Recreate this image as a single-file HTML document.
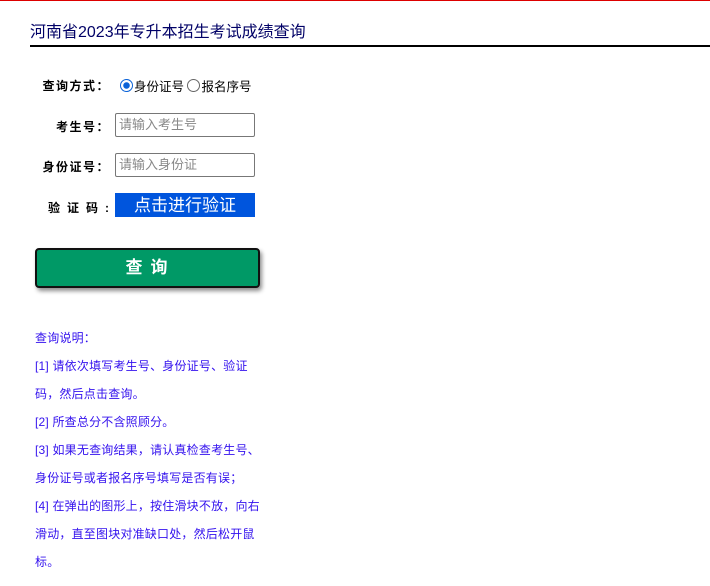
<!DOCTYPE html>
<html><head><meta charset="utf-8"><style>
body{margin:0;width:710px;height:586px;background:#fff;font-family:"Liberation Sans","Noto Sans CJK SC",sans-serif;position:relative;overflow:hidden}
.a{position:absolute}
.top{left:0;top:0;width:710px;height:1px;background:#d00}
.title{left:30px;top:18px;font-size:16px;color:#000066;white-space:nowrap}
.hr{left:30px;top:45px;width:680px;height:2px;background:#000}
.lab{font-size:12px;font-weight:bold;color:#000;text-align:right;width:80px;left:30px;letter-spacing:1.5px}
.inp{left:115px;border:1px solid #777;border-radius:2px;font-size:13px;color:#888;line-height:22px;padding-left:3px;box-sizing:border-box;width:140px;height:24px}
.rad{display:inline-block;width:11px;height:11px;border-radius:50%;border:1px solid #666;vertical-align:-1px;margin-right:1px}
.ver{left:115px;top:193px;width:140px;height:24px;background:#0055dd;color:#fff;font-size:17px;text-align:center;line-height:26px}
.btn{left:35px;top:248px;width:221px;height:36px;background:#009966;border:2px solid #111;border-radius:4px;box-shadow:2px 3px 4px rgba(0,0,0,.45);color:#fff;font-size:17px;font-weight:bold;text-align:center;line-height:36px;letter-spacing:8px;text-indent:6px}
.ins{left:35px;top:324px;width:232px;font-size:12px;color:#3311ee;line-height:28px;letter-spacing:0.2px}
</style></head><body>
<div class="a top"></div>
<div class="a title">河南省2023年专升本招生考试成绩查询</div>
<div class="a hr"></div>
<div class="a lab" style="top:77px">查询方式：</div>
<div class="a" style="left:120px;top:76px;font-size:12.5px;white-space:nowrap"><span class="rad" style="border-color:#0a62d8;background:radial-gradient(circle,#0a62d8 3px,#fff 3.5px)"></span>身份证号 <span class="rad"></span>报名序号</div>
<div class="a lab" style="top:118px">考生号：</div>
<div class="a inp" style="top:113px">请输入考生号</div>
<div class="a lab" style="top:158px">身份证号：</div>
<div class="a inp" style="top:153px">请输入身份证</div>
<div class="a lab" style="top:199px;letter-spacing:7px;width:86px">验证码:</div>
<div class="a ver">点击进行验证</div>
<div class="a btn">查询</div>
<div class="a ins">查询说明：<br>[1] 请依次填写考生号、身份证号、验证码，然后点击查询。<br>[2] 所查总分不含照顾分。<br>[3] 如果无查询结果，请认真检查考生号、身份证号或者报名序号填写是否有误；<br>[4] 在弹出的图形上，按住滑块不放，向右滑动，直至图块对准缺口处，然后松开鼠标。</div>
</body></html>
